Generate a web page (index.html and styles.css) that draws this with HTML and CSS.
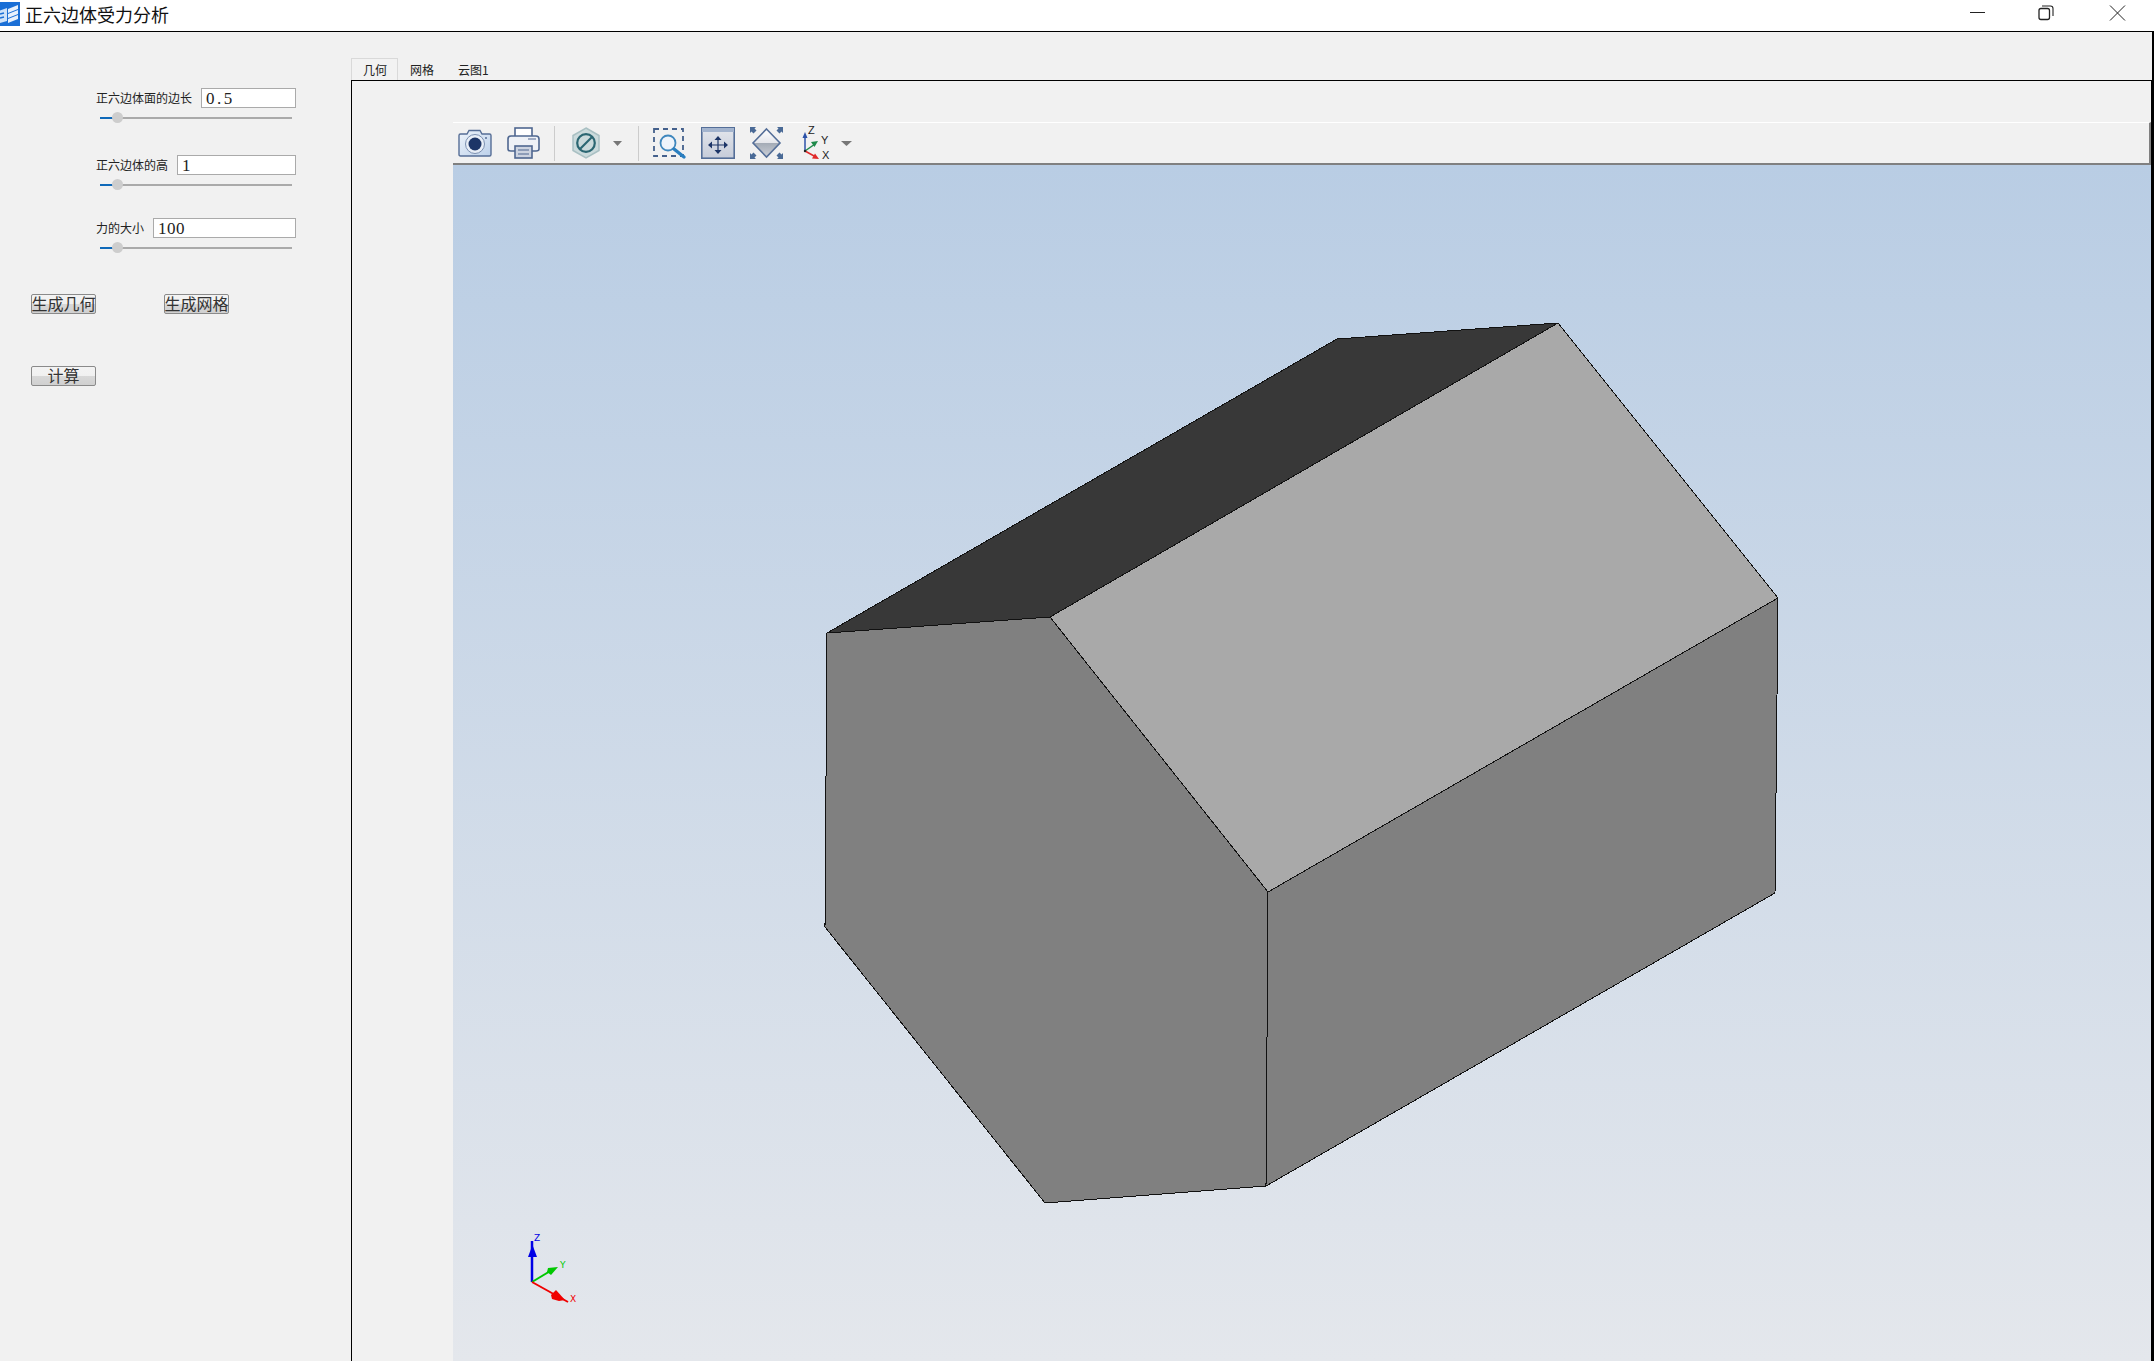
FILE: index.html
```html
<!DOCTYPE html>
<html lang="zh">
<head>
<meta charset="utf-8">
<title>正六边体受力分析</title>
<link rel="stylesheet" href="styles.css">
</head>
<body>
<div class="window">
  <header class="titlebar">
    <svg class="app-icon" width="20" height="24" viewBox="0 0 20 24">
      <rect width="20" height="24" fill="#1a6fd6"/>
      <path d="M-4 10 L7 6 L7 19 L-4 22Z" fill="#cfe2f8"/>
      <path d="M8 7 L18 3 L18 7 L8 11Z M8 12 L18 8 L18 12 L8 16Z M8 17 L18 13 L18 17 L8 21Z" fill="#e8f1fc"/>
      <path d="M0 12 L4 11 M0 16 L4 15" stroke="#1a6fd6" stroke-width="1.5"/>
    </svg>
    <span class="app-title">正六边体受力分析</span>
    <div class="win-controls">
      <svg class="win-btn" width="15" height="16" viewBox="0 0 15 16"><path d="M0 7.5H15" stroke="#222" fill="none"/></svg>
      <svg class="win-btn" width="15" height="16" viewBox="1.5 0 15 16"><rect x="0.5" y="3.5" width="10.5" height="11" rx="2" fill="none" stroke="#222" stroke-width="1.3"/><path d="M3.5 1H12Q14.5 1 14.5 3.5V11" fill="none" stroke="#222" stroke-width="1.1"/></svg>
      <svg class="win-btn" width="15" height="16" viewBox="0 0 15 16"><path d="M0 0.5L15 15.5M15 0.5L0 15.5" stroke="#222" fill="none"/></svg>
    </div>
  </header>
  <div class="client">
    <aside class="sidebar">
      <div class="group group-a">
        <div class="row"><label class="lbl">正六边体面的边长</label><div class="field field-dot">0.5</div></div>
        <div class="slider"><span class="fill"></span><span class="thumb"></span></div>
      </div>
      <div class="group group-b">
        <div class="row"><label class="lbl">正六边体的高</label><div class="field">1</div></div>
        <div class="slider"><span class="fill"></span><span class="thumb"></span></div>
      </div>
      <div class="group group-c">
        <div class="row"><label class="lbl">力的大小</label><div class="field">100</div></div>
        <div class="slider"><span class="fill"></span><span class="thumb"></span></div>
      </div>
      <div class="btn-row btn-row-a">
        <button class="btn">生成几何</button>
        <button class="btn">生成网格</button>
      </div>
      <div class="btn-row btn-row-b">
        <button class="btn">计算</button>
      </div>
    </aside>
    <main class="workspace">
      <nav class="tabs">
        <div class="tab tab-active">几何</div>
        <div class="tab">网格</div>
        <div class="tab">云图1</div>
      </nav>
      <section class="pane">
        <div class="toolbar">
          <svg class="ic ic-camera" width="34" height="28" viewBox="0 0 34 28">
            <defs><linearGradient id="cam" x1="0" y1="0" x2="1" y2="1"><stop offset="0" stop-color="#eef4fb"/><stop offset="1" stop-color="#bcd0ea"/></linearGradient></defs>
            <path d="M2.5 5H9L11 1.5H22L24 5H31.5Q33 5 33 6.5V25.5Q33 27 31.5 27H2.5Q1 27 1 25.5V6.5Q1 5 2.5 5Z" fill="url(#cam)" stroke="#566e96" stroke-width="1.4"/>
            <circle cx="17" cy="15" r="9.5" fill="#e8eef7" stroke="#7c90b0"/>
            <circle cx="17" cy="15" r="6.5" fill="#1d3567"/>
            <circle cx="28" cy="9" r="1" fill="#566e96"/>
          </svg>
          <svg class="ic ic-printer" width="33" height="32" viewBox="0 0 33 32">
            <rect x="8" y="1" width="17" height="10" fill="#fff" stroke="#4f6790" stroke-width="1.6"/>
            <path d="M4 9H29Q32 9 32 12V22Q32 24 29 24H4Q1 24 1 22V12Q1 9 4 9Z" fill="#eef1f6" stroke="#4f6790" stroke-width="1.6"/>
            <path d="M21 12H29" stroke="#8d9cb8" stroke-width="1.6"/>
            <rect x="8" y="19" width="17" height="12" fill="#ccd3e0" stroke="#4f6790" stroke-width="1.6"/>
            <path d="M11 23H22M11 27H22" stroke="#4f6790"/>
          </svg>
          <span class="sep sep-a"></span>
          <svg class="ic ic-hex" width="28" height="32" viewBox="0 0 28 32">
            <path d="M14 1L27 8.5V23.5L14 31L1 23.5V8.5Z" fill="#cbdadc" stroke="#a9c0c3" stroke-width="1.5"/>
            <circle cx="14" cy="16" r="8.8" fill="none" stroke="#2b6672" stroke-width="2.2"/>
            <path d="M8 22L20 10" stroke="#2b6672" stroke-width="2.2"/>
          </svg>
          <svg class="ic ic-arrow" width="9" height="5" viewBox="0 0 9 5"><path d="M0 0H9L4.5 5Z" fill="#777"/></svg>
          <span class="sep sep-b"></span>
          <svg class="ic ic-zoom" width="33" height="30" viewBox="0 0 33 30">
            <rect x="1" y="1" width="29" height="27" fill="none" stroke="#44608c" stroke-width="1.8" stroke-dasharray="5 4"/>
            <circle cx="15" cy="15" r="7.5" fill="#eef4fb" stroke="#3f87bd" stroke-width="1.8"/>
            <path d="M21 21L31 29" stroke="#2a7fc0" stroke-width="3.4" stroke-linecap="round"/>
          </svg>
          <svg class="ic ic-move" width="34" height="32" viewBox="0 0 34 32">
            <defs><linearGradient id="mv" x1="0" y1="0" x2="0" y2="1"><stop offset="0" stop-color="#e3e6ec"/><stop offset="1" stop-color="#c6ccd9"/></linearGradient></defs>
            <rect x="0.8" y="0.8" width="32.4" height="30.4" fill="url(#mv)" stroke="#546e98" stroke-width="1.6"/>
            <rect x="1" y="1" width="32" height="4" fill="#a3b4ce"/>
            <path d="M17 11V25M10 18H24" stroke="#1d3567" stroke-width="1.2"/>
            <path d="M17 9L13.5 13H20.5ZM17 27L13.5 23H20.5ZM7 18L11 14.5V21.5ZM27 18L23 14.5V21.5Z" fill="#1d3567"/>
          </svg>
          <svg class="ic ic-fit" width="33" height="32" viewBox="0 0 33 32">
            <defs>
              <linearGradient id="ft" x1="0" y1="0" x2="0" y2="1"><stop offset="0" stop-color="#fff"/><stop offset="1" stop-color="#e4e6eb"/></linearGradient>
              <linearGradient id="fb" x1="0" y1="0" x2="0" y2="1"><stop offset="0" stop-color="#a3abb6"/><stop offset="1" stop-color="#ccd0d8"/></linearGradient>
            </defs>
            <path d="M16.5 2L30 16H3Z" fill="url(#ft)"/>
            <path d="M3 16H30L16.5 30Z" fill="url(#fb)"/>
            <path d="M16.5 2L30 16L16.5 30L3 16Z" fill="none" stroke="#546e98" stroke-width="1.6"/>
            <path d="M0 0H6L4.5 1.5L6.5 3.5L3.5 6.5L1.5 4.5L0 6ZM33 0V6L31.5 4.5L29.5 6.5L26.5 3.5L28.5 1.5L27 0ZM0 32V26L1.5 27.5L3.5 25.5L6.5 28.5L4.5 30.5L6 32ZM33 32H27L28.5 30.5L26.5 28.5L29.5 25.5L31.5 27.5L33 26Z" fill="#4a6a96"/>
          </svg>
          <svg class="ic ic-axes" width="30" height="32" viewBox="0 0 30 32">
            <path d="M3 24V9" stroke="#2c52a8" stroke-width="1.5"/><path d="M3 5L0.5 11H5.5Z" fill="#2c52a8"/>
            <path d="M3 24L13 17" stroke="#1e8a4a" stroke-width="1.5"/><path d="M16 14L9 15L12.5 20Z" fill="#1e8a4a"/>
            <path d="M3 24L13 29.5" stroke="#e02a2a" stroke-width="1.5"/><path d="M17 32L10 31.5L13 26.5Z" fill="#e02a2a"/>
            <circle cx="3" cy="24" r="1.2" fill="#222"/>
            <text class="ax-t" x="6" y="6.5">Z</text><text class="ax-t" x="19" y="17">Y</text><text class="ax-t" x="20" y="31.5">X</text>
          </svg>
          <svg class="ic ic-arrow-b" width="11" height="5" viewBox="0 0 11 5"><path d="M0 0H11L5.5 5Z" fill="#777"/></svg>
        </div>
        <div class="viewport">
          <svg class="scene" width="1698" height="1196" viewBox="453 165 1698 1196">
            <g class="solid">
              <polygon points="1337,339 1558,323 1050,617 827,633" fill="#383838"/>
              <polygon points="1050,617 1558,323 1778,598 1268,892" fill="#a9a9a9"/>
              <polygon points="827,633 1050,617 1268,892 1266,1186 1045,1203 825,927" fill="#808080"/>
              <polygon points="1268,892 1778,598 1775,893 1266,1186" fill="#808080"/>
            </g>
            <g fill="none">
              <path d="M532 1282V1241" stroke="#0000e6" stroke-width="2.5"/>
              <path d="M532.5 1245L528 1257H537Z" fill="#0000e6"/>
              <path d="M532 1282L552 1270" stroke="#00c800" stroke-width="2"/>
              <path d="M558 1267L548 1268L547 1272L551 1275Z" fill="#00c800"/>
              <path d="M532 1282L568 1302" stroke="#f00000" stroke-width="2"/>
              <path d="M565 1300L556 1290L551 1295L552 1299L559 1301Z" fill="#f00000"/>
            </g>
            <text class="tri tri-z" x="534" y="1241">Z</text>
            <text class="tri tri-y" x="560" y="1268">Y</text>
            <text class="tri tri-x" x="570" y="1302">X</text>
          </svg>
        </div>
      </section>
    </main>
  </div>
</div>
</body>
</html>
```

FILE: styles.css
```css
* { box-sizing: border-box; }
html, body { margin: 0; height: 100%; overflow: hidden; }
body {
  font-family: "Noto Sans CJK SC", "Liberation Sans", sans-serif;
  background: #fff;
  color: #111;
}
.window { width: 2154px; height: 1361px; display: flex; flex-direction: column; }

.titlebar {
  height: 32px;
  flex: none;
  display: flex;
  align-items: center;
  background: #fff;
  border-bottom: 1px solid #000;
}
.app-icon { flex: none; margin-top: -3px; }
.app-title { margin-left: 5px; font-size: 18px; line-height: 26px; margin-top: -4px; color: #111; }
.win-controls { margin-left: auto; display: flex; align-items: center; margin-right: 29px; gap: 55px; margin-top: -5px; }
.win-btn { display: block; overflow: visible; }

.client {
  flex: 1;
  min-height: 0;
  display: flex;
  background: #f1f1f1;
  border-right: 2px solid #000;
}
.sidebar { width: 351px; flex: none; padding-left: 96px; }
.group { width: 200px; }
.group-a { margin-top: 56px; }
.group-b { margin-top: 31px; }
.group-c { margin-top: 27px; }
.row { display: flex; align-items: center; gap: 9px; height: 20px; }
.lbl { font-size: 12px; line-height: 20px; white-space: nowrap; color: #222; }
.field {
  flex: 1;
  height: 20px;
  background: #fff;
  border: 1px solid #aaa;
  font-family: "Liberation Serif", serif;
  font-size: 17px;
  line-height: 20px;
  letter-spacing: 0.5px;
  padding-left: 4px;
  color: #222;
}
.field-dot { letter-spacing: 2.5px; }
.slider { position: relative; margin: 4px 0 0 4px; width: 192px; height: 12px; }
.slider::before {
  content: "";
  position: absolute; left: 0; right: 0; top: 5px; height: 2px;
  background: #aaa;
}
.fill { position: absolute; left: 0; top: 5px; height: 2px; width: 14px; background: #0f69b9; }
.thumb { position: absolute; left: 12px; top: 0; width: 11px; height: 11px; border-radius: 50%; background: #cdcdcd; }

.btn-row { display: flex; gap: 68px; margin-left: -65px; }
.btn-row-a { margin-top: 40px; }
.btn-row-b { margin-top: 52px; }
.btn {
  width: 65px;
  height: 20px;
  padding: 0 0 2px;
  border: 1px solid #8a8a8a;
  border-radius: 2px;
  background: linear-gradient(#f3f3f3 0, #f0f0f0 50%, #d8d8d8 50%, #d0d0d0 100%);
  font-family: "Noto Sans CJK SC", sans-serif;
  font-size: 16px;
  line-height: 16px;
  color: #333;
  white-space: nowrap;
  display: flex;
  align-items: center;
  justify-content: center;
}

.workspace { flex: 1; min-width: 0; display: flex; flex-direction: column; padding-top: 26px; }
.tabs { height: 22px; flex: none; display: flex; }
.tab { padding: 0 12px; font-size: 12px; line-height: 23px; color: #222; }
.tab-active { padding: 0 10px 0 11px; border: 1px solid #d9d9d9; border-bottom: 0; line-height: 22px; background: #f2f2f2; }
.pane {
  flex: 1;
  min-height: 0;
  display: flex;
  flex-direction: column;
  border-top: 1px solid #000;
  border-left: 1px solid #000;
  border-right: 1px solid #000;
  padding: 41px 0 0 101px;
}
.toolbar {
  height: 43px;
  flex: none;
  display: flex;
  align-items: center;
  background: #f1f1f1;
  border-top: 1px solid #fff;
  border-bottom: 2px solid #808080;
  border-right: 2px solid #808080;
  padding-left: 5px;
}
.ic { display: block; flex: none; margin-left: 15px; overflow: visible; }
.ic-camera { margin-left: 0; }
.sep { width: 1px; height: 35px; background: #ccc; flex: none; }
.sep-a { margin-left: 14px; }
.ic-hex { margin-left: 17px; }
.ic-arrow { margin-left: 13px; }
.sep-b { margin-left: 16px; }
.ic-zoom { margin-left: 14px; }
.ic-axes { margin-left: 19px; }
.ic-arrow-b { margin-left: 9px; }
.ax-t { font-family: "Liberation Sans", sans-serif; font-size: 11px; fill: #222; }

.viewport {
  flex: 1;
  min-height: 0;
  overflow: hidden;
  background: linear-gradient(#b9cde4, #e4e7ec);
}
.scene { display: block; }
.solid { stroke: #111; stroke-width: 1; shape-rendering: crispEdges; }
.tri { font-family: "DejaVu Sans", sans-serif; font-size: 9px; }
.tri-z { fill: #0000e6; }
.tri-y { fill: #00c800; }
.tri-x { fill: #f00000; }
```
